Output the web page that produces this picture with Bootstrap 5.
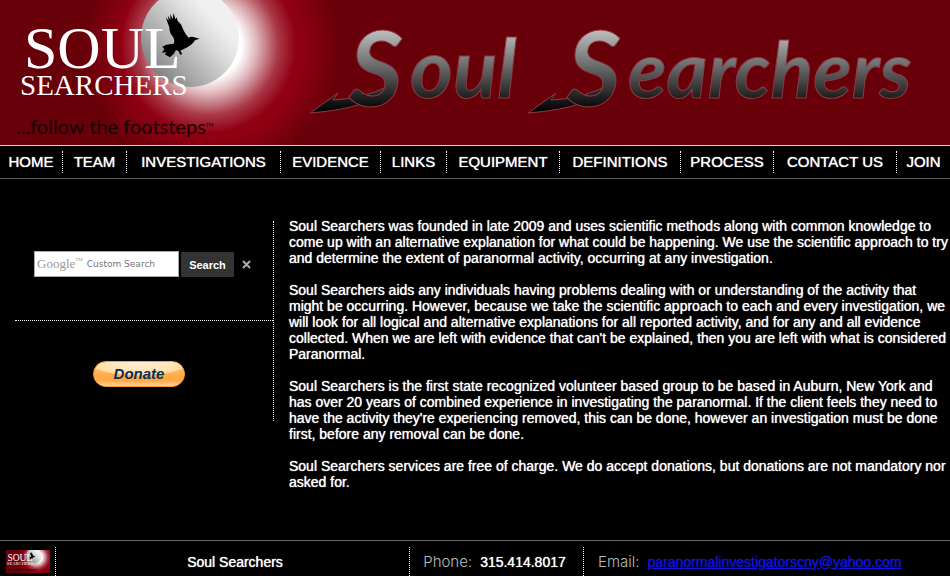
<!DOCTYPE html>
<html lang="en">
<head>
<meta charset="utf-8">
<meta name="viewport" content="width=device-width, initial-scale=1">
<title>Soul Searchers</title>
<link href="https://cdn.jsdelivr.net/npm/bootstrap@5.3.0/dist/css/bootstrap.min.css" rel="stylesheet">
<style>
  body { background: #000; color: #fff; font: 14px/16px "Liberation Sans", Arial, sans-serif; text-shadow: 0 0 1px #fff; }
  .site-banner { background: #680009; border-bottom: 1px solid #d8d4cc; text-shadow: none; }
  .site-banner svg { display: block; }
  .logo-art { width: 340px; height: 145px; }
  .wordmark { width: 600px; height: 145px; overflow: visible; }
  .main-menu { display: grid; grid-template-columns: 62fr 64fr 154fr 100fr 66fr 113fr 121fr 93fr 123fr 54fr; border-bottom: 1px solid #555; padding: 5px 0; font-size: 15px; }
  .main-menu a { color: #fff; text-decoration: none; line-height: 22px; text-align: center; white-space: nowrap; }
  .main-menu a + a, .dot-left { border-left: 1px dotted #fff; }
  .side-column { width: 259px; height: 200px; margin: 42px 15px 0; border-right: 1px dotted #fff; }
  .side-search { height: 100px; border-bottom: 1px dotted #fff; padding: 30px 0 0 19px; }
  .search-field { width: 145px; height: 26px; background: #fff; border: 1px solid #a9a9a9; padding-left: 2px; text-shadow: none; }
  .search-brand { font: 13px/22px "Liberation Serif", serif; color: #999; }
  .search-brand sup { font-size: 5px; top: -7px; }
  .search-field input { min-width: 0; border: 0; outline: 0; padding: 0; font: 9px/20px "DejaVu Sans", sans-serif; color: #333; background: transparent; }
  .search-field input::placeholder { color: #777; opacity: 1; }
  .search-go { width: 53px; height: 25px; margin: 1px 0 0 2px; background: #333; border: 0; border-radius: 1px; color: #fff; font-size: 11px; padding: 0; }
  .search-clear { background: none; border: 0; padding: 0; width: 9px; height: 9px; display: flex; margin: 9px 0 0 8px; }
  .donate { width: 92px; height: 26px; margin: 40px 10px 0 0; border: 1px solid #ff9933; border-radius: 13px; padding: 0; color: #083058; font: italic bold 15px/22px "Liberation Sans", sans-serif; text-shadow: none;
    background: radial-gradient(ellipse 54px 15px at 50% 0, #fff2dd 0, #ffdfa9 90%, transparent 100%) no-repeat, linear-gradient(#ffc477 0, #ffab48 60%, #ffa844 75%, #ffe0b5 100%) no-repeat; background-origin: border-box; }
  .about { padding: 39px 0 34px; }
  .about p { margin-bottom: 16px; }
  .site-footer { border-top: 1px solid #666; padding-top: 6px; }
  .foot-cell { height: 29px; }
  .foot-thumb { width: 55px; padding-left: 6px; text-shadow: none; }
  .foot-thumb svg { width: 44px; height: 23px; }
  .foot-name { flex: 354 1 0; padding-left: 5px; }
  .foot-phone { flex: 0 0 174px; padding-right: 4px; }
  .foot-mail { flex: 0 0 367px; padding-left: 14px; }
  .foot-tag { font: 300 15px/16px Inter, sans-serif; color: #bbb; text-shadow: none; }
  .foot-mail a { color: #1111dd; text-shadow: 0 0 1px #1111dd; }
</style>
<script src="https://cdn.jsdelivr.net/npm/bootstrap@5.3.0/dist/js/bootstrap.bundle.min.js"></script>
</head>
<body>
<header class="site-banner d-flex overflow-hidden">
  <svg class="logo-art flex-shrink-0" viewBox="0 0 340 145" role="img" aria-label="Soul Searchers, follow the footsteps">
    <defs>
      <radialGradient id="halo" gradientUnits="userSpaceOnUse" cx="212" cy="48" r="128">
        <stop offset="0" stop-color="#940014"/><stop offset=".7" stop-color="#900013"/><stop offset="1" stop-color="#680009"/>
      </radialGradient>
      <radialGradient id="glow" gradientUnits="userSpaceOnUse" cx="208" cy="45" r="88">
        <stop offset="0" stop-color="#fff"/><stop offset=".38" stop-color="#fff"/><stop offset=".55" stop-color="#fff" stop-opacity=".72"/><stop offset=".8" stop-color="#fff" stop-opacity=".22"/><stop offset="1" stop-color="#fff" stop-opacity="0"/>
      </radialGradient>
      <linearGradient id="moon" x1=".1" y1=".9" x2=".75" y2=".3">
        <stop offset="0" stop-color="#777"/><stop offset=".35" stop-color="#a8a8a8"/><stop offset=".8" stop-color="#dedede"/><stop offset="1" stop-color="#f0f0f0"/>
      </linearGradient>
    </defs>
    <g id="logo">
      <rect width="340" height="145" fill="#680009"/>
      <circle cx="212" cy="48" r="128" fill="url(#halo)"/>
      <circle cx="212" cy="45" r="90" fill="url(#glow)"/>
      <circle cx="190" cy="38" r="49" fill="url(#moon)"/>
      <g fill="#fff" font-family="Liberation Serif, serif">
        <text x="24" y="68" font-size="60">SOUL</text>
        <text x="20" y="95" font-size="29">SEARCHERS</text>
      </g>
      <path transform="scale(.3333)" d="M497 52L506 62L503 46L511 60L511 42L518 58L521 39L526 58L530 52L533 63Q545 72 549 88Q556 104 566 113Q575 108 583 112L599 116L585 121Q575 138 550 148L541 152L546 160L543 166L538 160L536 154L528 150Q522 165 510 172L494 163L500 157L486 158L493 148L487 140Q500 130 520 132Q526 126 520 112Q508 100 508 82Z"/>
      <text x="16" y="134" font-family="Lato, sans-serif" font-size="20" fill="#140003">...follow the footsteps<tspan font-size="5" dy="-7">TM</tspan></text>
    </g>
  </svg>
  <svg class="wordmark flex-shrink-0" viewBox="340 0 600 145" role="img" aria-label="Soul Searchers">
    <defs>
      <linearGradient id="steel" gradientUnits="userSpaceOnUse" x1="0" y1="32" x2="0" y2="112">
        <stop offset="0" stop-color="#bbb"/><stop offset=".45" stop-color="#666"/><stop offset=".8" stop-color="#222"/><stop offset="1" stop-color="#000"/>
      </linearGradient>
      <path id="flourish" d="M310 113L338 93L333 100Q365 99 392 84Q376 108 310 113Z"/>
    </defs>
    <g fill="url(#steel)" stroke="#8c3a44" stroke-width="1" font-family="Lato, sans-serif" font-style="italic" font-weight="bold">
      <use href="#flourish"/>
      <use href="#flourish" x="218"/>
      <text x="349" y="106" font-size="104">S</text><text x="410" y="98" font-size="82">oul</text>
      <text x="567" y="106" font-size="104">S</text><text x="628" y="98" font-size="79">earchers</text>
    </g>
  </svg>
</header>
<nav class="main-menu" aria-label="Main">
  <a href="#">HOME</a><a href="#">TEAM</a><a href="#">INVESTIGATIONS</a><a href="#">EVIDENCE</a><a href="#">LINKS</a><a href="#">EQUIPMENT</a><a href="#">DEFINITIONS</a><a href="#">PROCESS</a><a href="#">CONTACT US</a><a href="#">JOIN</a>
</nav>
<main class="d-flex">
  <aside class="side-column flex-shrink-0">
    <form class="side-search d-flex align-items-start" onsubmit="return false">
      <div class="search-field d-flex align-items-center">
        <label class="search-brand me-1" for="q">Google<sup>TM</sup></label>
        <input class="flex-grow-1" id="q" type="text" placeholder="Custom Search">
      </div>
      <button class="search-go fw-bold" type="submit">Search</button>
      <button class="search-clear" type="reset" aria-label="Clear">
        <svg width="9" height="9" viewBox="0 0 9 9"><path d="M1 1L8 8M8 1L1 8" stroke="#aaa" stroke-width="2"/></svg>
      </button>
    </form>
    <div class="text-center"><button class="donate" type="button">Donate</button></div>
  </aside>
  <section class="about flex-grow-1">
    <p>Soul Searchers was founded in late 2009 and uses scientific methods along with common knowledge to come up with an alternative explanation for what could be happening. We use the scientific approach to try and determine the extent of paranormal activity, occurring at any investigation.</p>
    <p>Soul Searchers aids any individuals having problems dealing with or understanding of the activity that might be occurring. However, because we take the scientific approach to each and every investigation, we will look for all logical and alternative explanations for all reported activity, and for any and all evidence collected. When we are left with evidence that can't be explained, then you are left with what is considered Paranormal.</p>
    <p>Soul Searchers is the first state recognized volunteer based group to be based in Auburn, New York and has over 20 years of combined experience in investigating the paranormal. If the client feels they need to have the activity they're experiencing removed, this can be done, however an investigation must be done first, before any removal can be done.</p>
    <p>Soul Searchers services are free of charge. We do accept donations, but donations are not mandatory nor asked for.</p>
  </section>
</main>
<footer class="site-footer d-flex">
  <div class="foot-cell foot-thumb d-flex align-items-center"><svg viewBox="15 0 277 145" role="img" aria-label="Soul Searchers logo"><use href="#logo"/></svg></div>
  <div class="foot-cell foot-name dot-left d-flex align-items-center justify-content-center">Soul Searchers</div>
  <div class="foot-cell foot-phone dot-left d-flex align-items-center justify-content-center gap-2"><span class="foot-tag">Phone:</span><span>315.414.8017</span></div>
  <div class="foot-cell foot-mail dot-left d-flex align-items-center gap-2"><span class="foot-tag">Email:</span><a href="mailto:paranormalinvestigatorscny@yahoo.com">paranormalinvestigatorscny@yahoo.com</a></div>
</footer>
</body>
</html>
